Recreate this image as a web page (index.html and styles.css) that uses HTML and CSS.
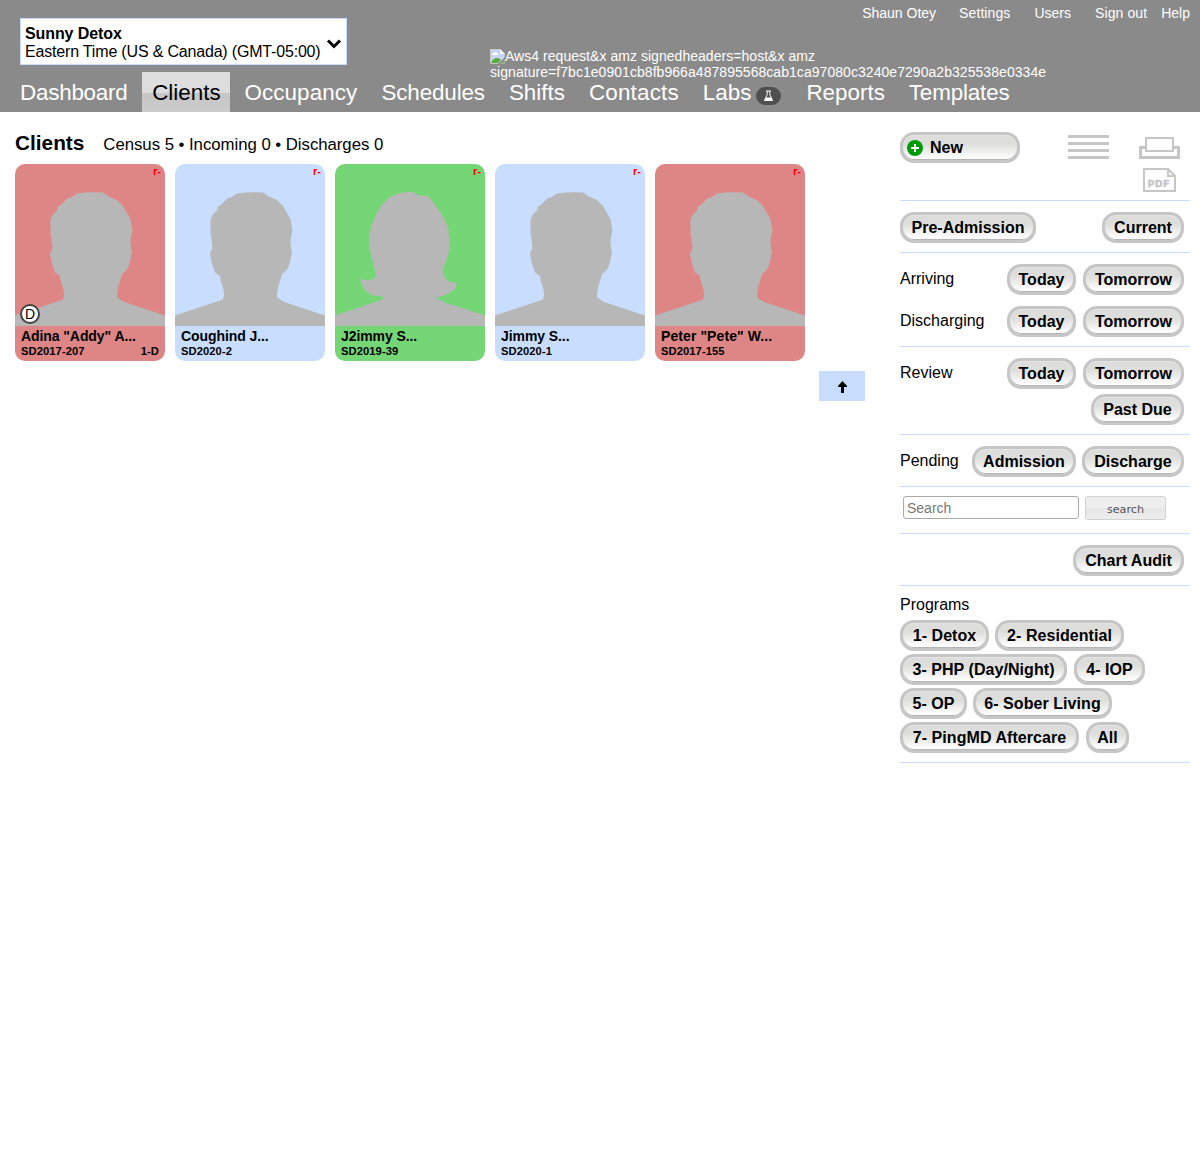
FILE: index.html
```
<!DOCTYPE html>
<html lang="en">
<head>
<meta charset="utf-8">
<title>Clients</title>
<link rel="stylesheet" href="styles.css">
</head>
<body>
<svg class="defs" width="0" height="0" aria-hidden="true">
  <symbol id="man" viewBox="0 0 150 162"><path d="M0 151.500L48 135.500L49 131C49 123 45 118 45 112L40 108.500Q36 99 35 89.500L37.500 84L35.500 68L35.500 56Q37 50 42.500 46V43L47 40L52 34.500Q58 33 62 29.500Q74 27.500 88 28.500L93 32L102 36L108 42L112 49L115.500 55L117.500 66L115.500 76L116 84L117 88L115 98Q113 107 107.500 109.500L104 120Q102 127 102 133Q106 137 112 139L150 151.500V162H0Z"/></symbol>
  <symbol id="woman" viewBox="0 0 150 162"><path d="M0 151.500L46 136Q51 133 46 132Q30 134 25 115Q32 117 39 115Q42 112 39 103C35 86 34 83 34.500 71Q36 59 44 45Q52 31 68 28.500Q76 27.500 79 28.500L83 31.500H91Q97 34 108 53Q114 61 114 73C115 88 113 93 110 99Q107 106 109 111Q111 119 120 118.500Q125 123 114 129Q108 133 101 133Q106 138 118 141L150 151.500V162H0Z"/></symbol>
</svg>

<header class="header">
  <nav class="account">
    <a class="user">Shaun Otey</a><a class="settings">Settings</a><a class="users">Users</a><a class="signout">Sign out</a><a>Help</a>
  </nav>
  <div class="facility">
    <div><strong>Sunny Detox</strong><span>Eastern Time (US &amp; Canada) (GMT-05:00)</span></div>
    <svg width="16" height="12" viewBox="0 0 16 12"><path d="M2 2.500L8 8.500L14 2.500" fill="none" stroke="#000" stroke-width="3"/></svg>
  </div>
  <div class="logo-alt">
    <svg width="15" height="15" viewBox="0 0 15 15"><path d="M.5.500H10L14.500 5V14.500H.5Z" fill="#c6d7f5" stroke="#c9c9c9"/><path d="M10 0V5H15Z" fill="#fff"/><path d="M2 6Q2 4 4 4Q5 2 7 4Q8 4 8 6Z" fill="#fff"/><path d="M1 14Q3 9 7 9Q10 9 11 11L8 14Z" fill="#55ad3a"/><path d="M8 15L15 8V11L11 15Z" fill="#8a8a8a"/><path d="M12 14.500L14.500 12V14.500Z" fill="#55ad3a"/></svg><span class="alt-first">Aws4 request&amp;x amz signedheaders=host&amp;x amz</span><br>signature=f7bc1e0901cb8fb966a487895568cab1ca97080c3240e7290a2b325538e0334e
  </div>
  <nav class="tabs">
    <a class="dashboard">Dashboard</a><a class="active">Clients</a><a class="occupancy">Occupancy</a><a class="schedules">Schedules</a><a>Shifts</a><a class="contacts">Contacts</a><a class="labs">Labs <span class="flask"><svg width="11" height="12" viewBox="0 0 11 12"><path d="M3 1H8M4.200 1V4.500L1.500 10.500H9.500L6.800 4.500V1" fill="none" stroke="#fff"/><path d="M3 7.500H8L9.500 11H1.500Z" fill="#fff"/></svg></span></a><a>Reports</a><a class="templates">Templates</a>
  </nav>
</header>

<div class="page">
  <main class="main">
    <div class="title"><h1>Clients</h1><span>Census 5 • Incoming 0 • Discharges 0</span></div>
    <section class="cards">
      <article class="card red"><b class="flag">r-</b><svg class="photo"><use href="#man"/></svg><i class="badge">D</i><h2>Adina "Addy" A...</h2><p><span>SD2017-207</span><span>1-D</span></p></article>
      <article class="card blue"><b class="flag">r-</b><svg class="photo"><use href="#man"/></svg><h2>Coughind J...</h2><p><span>SD2020-2</span></p></article>
      <article class="card green"><b class="flag">r-</b><svg class="photo"><use href="#woman"/></svg><h2>J2immy S...</h2><p><span>SD2019-39</span></p></article>
      <article class="card blue"><b class="flag">r-</b><svg class="photo"><use href="#man"/></svg><h2>Jimmy S...</h2><p><span>SD2020-1</span></p></article>
      <article class="card red"><b class="flag">r-</b><svg class="photo"><use href="#man"/></svg><h2 class="wide">Peter "Pete" W...</h2><p><span>SD2017-155</span></p></article>
    </section>
    <a class="top"><svg width="9" height="12" viewBox="0 0 9 12"><path d="M4.500 0L9 5V6H6V12H3V6H0V5Z"/></svg></a>
  </main>

  <aside class="side">
    <section class="tools">
      <a class="btn new"><svg width="16" height="16" viewBox="0 0 16 16"><circle cx="8" cy="8" r="8" fill="#009b09"/><path d="M8 4V12M4 8H12" stroke="#fff" stroke-width="2"/></svg>New</a>
      <svg class="list" width="41" height="24" viewBox="0 0 41 24"><path d="M0 1.500H41M0 8.500H41M0 15.500H41M0 22.500H41" stroke="#c6c6c6" stroke-width="3"/></svg>
      <div class="output">
        <svg width="41" height="22" viewBox="0 0 41 22"><path d="M6 10.500H1.500V20.500H39.500V10.500H35" fill="none" stroke="#c6c6c6" stroke-width="3"/><path d="M7 1H34V14H7Z" fill="#fff" stroke="#c6c6c6" stroke-width="2"/></svg>
        <svg width="33" height="24" viewBox="0 0 33 24"><path d="M1 1H25L32 8V23H1Z" fill="none" stroke="#c6c6c6" stroke-width="2"/><path d="M25 1V8H32" fill="none" stroke="#c6c6c6" stroke-width="2"/><text class="pdf" x="4.500" y="19">PDF</text></svg>
      </div>
    </section>
    <section><div class="row"><a class="btn w136">Pre-Admission</a><a class="btn w82">Current</a></div></section>
    <section class="arrivals">
      <div class="row"><span>Arriving</span><div><a class="btn w69">Today</a><a class="btn w101">Tomorrow</a></div></div>
      <div class="row"><span>Discharging</span><div><a class="btn w69">Today</a><a class="btn w101">Tomorrow</a></div></div>
    </section>
    <section>
      <div class="row"><span>Review</span><div><a class="btn w69">Today</a><a class="btn w101">Tomorrow</a></div></div>
      <div class="row end"><a class="btn w93">Past Due</a></div>
    </section>
    <section><div class="row"><span>Pending</span><div class="tight"><a class="btn w104">Admission</a><a class="btn w102">Discharge</a></div></div></section>
    <section class="search"><input type="text" placeholder="Search"><button>search</button></section>
    <section><div class="row end"><a class="btn w111">Chart Audit</a></div></section>
    <section class="programs">
      <p>Programs</p>
      <div><a class="btn w89">1- Detox</a><a class="btn w129">2- Residential</a></div>
      <div><a class="btn w167">3- PHP (Day/Night)</a><a class="btn w71">4- IOP</a></div>
      <div><a class="btn w67">5- OP</a><a class="btn w139">6- Sober Living</a></div>
      <div><a class="btn w179">7- PingMD Aftercare</a><a class="btn w43">All</a></div>
    </section>
  </aside>
</div>
</body>
</html>
```

FILE: styles.css
```
* { box-sizing: border-box; }
body { margin: 0; background: #fff; color: #000; font: 16px/18px "Liberation Sans", Arial, sans-serif; }
h1, h2, p { margin: 0; }
svg { display: block; flex: none; }
.defs { position: absolute; }

.header { position: relative; height: 112px; background: #8a8a8a; color: #fff; display: flex; flex-direction: column; }
.account { height: 18px; padding: 5px 10px 0 0; display: flex; justify-content: flex-end; font-size: 14px; line-height: 17px; }
.user { margin-right: 23px; }
.settings, .users { margin-right: 24px; }
.signout { margin-right: 14px; }
.account a { white-space: nowrap; }
.account .settings, .account .signout { letter-spacing: 0.1px; }
.facility { width: 327px; height: 47px; flex: none; margin-left: 20px; padding: 6px 4px 4px 4px; border: 1px solid #c8ddfe; background: #fff; color: #000; display: flex; justify-content: space-between; }
.facility strong, .facility span { display: block; white-space: nowrap; }
.facility span { letter-spacing: -0.18px; }
.facility strong { letter-spacing: -0.1px; }
.facility svg { margin-top: 13px; }
.logo-alt { position: absolute; left: 490px; top: 48px; font-size: 14px; line-height: 16px; letter-spacing: 0.05px; white-space: nowrap; }
.logo-alt svg { display: inline-block; vertical-align: -3px; }
.alt-first { letter-spacing: 0.04px; }
.tabs { height: 40px; margin: 7px 0 0 10px; display: flex; gap: 4px; font-size: 22.400px; line-height: 41px; white-space: nowrap; }
.tabs a { padding: 0 10px; }
.dashboard { letter-spacing: -0.22px; }
.occupancy { letter-spacing: 0.11px; }
.schedules { letter-spacing: -0.12px; }
.contacts { letter-spacing: 0.2px; }
.templates { letter-spacing: -0.15px; }
.tabs .active { background: linear-gradient(#dedede 0, #dcdcdc 21px, #c7c7c7 21px, #cacaca); color: #000; padding: 0 9.800px 0 10.600px; }
.labs { display: flex; gap: 6px; }
.flask { width: 25px; height: 18px; margin: 15px 1px 0 -1px; border-radius: 9px; background: #4f4f4f; display: flex; align-items: center; justify-content: center; }

.page { display: flex; justify-content: space-between; padding: 20px 10px 0 15px; }
.main { width: 850px; }
.title { height: 32px; display: flex; gap: 19px; }
.title h1 { font-size: 20.800px; line-height: 22px; }
.title span { font-size: 16.800px; line-height: 25px; letter-spacing: -0.04px; }
.cards { display: flex; gap: 10px; }
.card { position: relative; width: 150px; height: 197px; border-radius: 10px; overflow: hidden; }
.red { background: #de8685; }
.blue { background: #c9deff; }
.green { background: #75d676; }
.flag { position: absolute; right: 4px; top: 1px; font-size: 11.200px; line-height: 12px; color: #f00; }
.photo { width: 150px; height: 162px; fill: #b7b7b7; }
.badge { position: absolute; left: 5px; top: 140px; width: 20px; height: 20px; border: 2px solid #444; border-radius: 50%; background: #fff; font-size: 14px; line-height: 17px; font-style: normal; text-align: center; }
.card h2 { margin: 1px 6px 0; font-size: 14px; line-height: 18px; letter-spacing: -0.08px; white-space: nowrap; }
.card .wide { letter-spacing: 0.08px; }
.card p { margin: 0 6px; display: flex; justify-content: space-between; font-size: 11.200px; line-height: 12px; font-weight: bold; letter-spacing: 0.08px; }
.top { width: 46px; height: 30px; margin: 10px 0 0 auto; padding-top: 2px; background: #c9deff; display: flex; align-items: center; justify-content: center; }

.side { width: 290px; }
.side section { padding: 11px 6px 9px 0; border-bottom: 1px solid #c8ddfc; }
.row { display: flex; justify-content: space-between; align-items: flex-start; }
.row > span { line-height: 29px; }
.row > div { display: flex; gap: 7px; }
.row > .tight { gap: 6px; }
.row + .row { margin-top: 5px; }
.arrivals .row + .row { margin-top: 11px; }
.row.end { justify-content: flex-end; }
.btn { height: 31px; display: block; border: 3px solid #c6c6c6; border-radius: 14px; background: linear-gradient(#dddddb 0, #dddddb 35%, #fff 95%); box-shadow: inset 0 1px #e6e6e6, inset 0 -1px #b4b4b4; font-weight: bold; line-height: 25px; text-align: center; white-space: nowrap; }
.w43 { width: 43px; } .w67 { width: 67px; } .w69 { width: 69px; } .w71 { width: 71px; }
.w82 { width: 82px; } .w89 { width: 89px; } .w93 { width: 93px; } .w101 { width: 101px; }
.w102 { width: 102px; } .w104 { width: 104px; } .w111 { width: 111px; } .w129 { width: 129px; }
.w136 { width: 136px; } .w139 { width: 139px; } .w167 { width: 167px; } .w179 { width: 179px; }
.side .tools { height: 69px; padding: 0 10px 0 0; display: flex; align-items: flex-start; }
.new { width: 120px; padding-left: 4px; display: flex; align-items: center; gap: 7px; }
.list { margin: 3px 30px 0 48px; }
.output { padding-top: 5px; display: flex; flex-direction: column; gap: 9px; }
.output svg + svg { margin-left: 4px; }
.pdf { font: bold 9.500px "DejaVu Sans", sans-serif; fill: #c6c6c6; stroke: #c6c6c6; stroke-width: 0.4px; letter-spacing: 0.3px; }
.side .search { height: 47px; padding: 9px 0 0 3px; display: flex; align-items: flex-start; gap: 6px; }
.search input { width: 176px; height: 23px; padding: 1px 3px; border: 1px solid #aaa; border-radius: 3px; font: 14px "Liberation Sans", sans-serif; }
.search input::placeholder { color: #777; }
.search button { width: 81px; height: 24px; padding: 2px 0 0; border: 1px solid #d2d2d2; border-radius: 3px; background: linear-gradient(#eee 50%, #e7e7e7 50%, #ededed); color: #555; font: 11.200px "DejaVu Sans", sans-serif; }
.side .programs { padding-top: 10px; }
.programs p { line-height: 18px; margin-bottom: 6px; }
.programs div { display: flex; gap: 7px; }
.programs .btn { letter-spacing: 0.06px; }
.programs div + div { margin-top: 3px; }
.programs div:nth-of-type(odd) { gap: 6px; }
```
